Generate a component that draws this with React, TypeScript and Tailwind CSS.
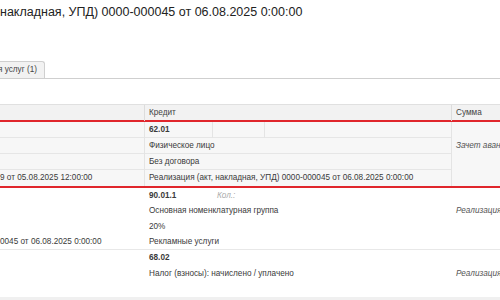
const font = { fontFamily: '"Liberation Sans", Arial, sans-serif' };

export default function App() {
  const cell = 'h-4 leading-4 px-[4px] whitespace-nowrap overflow-hidden';
  return (
    <div className="w-[500px] h-[300px] overflow-hidden bg-white text-[#3a3a3a]" style={font}>
      <div className="h-[26px] pt-[2px] text-[12.5px] leading-[20px] text-[#222] whitespace-nowrap">
        накладная, УПД) 0000-000045 от 06.08.2025 0:00:00
      </div>
      <div className="mt-[35px] flex items-end border-b border-[#cfcfcf]">
        <div className="h-[17px] w-[45px] bg-[#f2f2f2] border-r border-t border-[#cfcfcf] rounded-tr-[3px] text-[8.2px] leading-[16px] text-[#444] whitespace-nowrap overflow-hidden flex justify-end pr-[7px]">
          ия услуг (1)
        </div>
      </div>
      <div className="mt-[25px] text-[8.2px]">
        {/* header */}
        <div className="grid grid-cols-[145px_307px_1fr] h-[16px] bg-[#f2f2f2] border-t border-[#e0e0e0] text-[#444]">
          <div className="border-r border-[#dcdcdc]" />
          <div className={`${cell} border-r border-[#dcdcdc]`}>Кредит</div>
          <div className={cell}>Сумма</div>
        </div>
        {/* selected record */}
        <div className="border-y-2 border-[#e0262c] bg-[#f7f7f7] grid grid-cols-[145px_307px_1fr]">
          <div className="border-r border-[#e4e4e4] flex flex-col">
            <div className="h-4 border-b border-[#e6e6e6]" />
            <div className="h-4 border-b border-[#e6e6e6]" />
            <div className="h-4 border-b border-[#e6e6e6]" />
            <div className={`${cell} pl-0`}>9 от 05.08.2025 12:00:00</div>
          </div>
          <div className="border-r border-[#e4e4e4] flex flex-col">
            <div className="h-4 border-b border-[#e6e6e6] grid grid-cols-[68px_52px_1fr]">
              <div className={`${cell} font-bold border-r border-[#e4e4e4]`}>62.01</div>
              <div className="border-r border-[#e4e4e4]" />
              <div />
            </div>
            <div className={`${cell} border-b border-[#e6e6e6]`}>Физическое лицо</div>
            <div className={`${cell} border-b border-[#e6e6e6]`}>Без договора</div>
            <div className={cell}>Реализация (акт, накладная, УПД) 0000-000045 от 06.08.2025 0:00:00</div>
          </div>
          <div className="flex flex-col">
            <div className="h-4" />
            <div className={`${cell} italic text-[#555]`}>Зачет аванса</div>
          </div>
        </div>
        {/* second record */}
        <div className="grid grid-cols-[145px_307px_1fr] border-b border-[#e8e8e8]">
          <div className="flex flex-col justify-end">
            <div className={`${cell} pl-0 h-[15px] leading-[15px]`}>0045 от 06.08.2025 0:00:00</div>
          </div>
          <div className="flex flex-col">
            <div className="grid grid-cols-[68px_52px_1fr] h-[15px] leading-[15px]">
              <div className={`${cell} h-[15px] leading-[15px] font-bold`}>90.01.1</div>
              <div className={`${cell} h-[15px] leading-[15px] italic text-[#aaa]`}>Кол.:</div>
              <div />
            </div>
            <div className={`${cell} h-[16px]`}>Основная номенклатурная группа</div>
            <div className={`${cell} h-[15px] leading-[15px]`}>20%</div>
            <div className={`${cell} h-[15px] leading-[15px]`}>Рекламные услуги</div>
          </div>
          <div className="flex flex-col">
            <div className="h-[15px]" />
            <div className={`${cell} italic text-[#555]`}>Реализация</div>
          </div>
        </div>
        {/* third record */}
        <div className="grid grid-cols-[145px_307px_1fr] border-b-[3px] border-[#f0f0f0]">
          <div />
          <div className="flex flex-col">
            <div className={`${cell} font-bold`}>68.02</div>
            <div className={cell}>Налог (взносы): начислено / уплачено</div>
            <div className="h-[15px]" />
          </div>
          <div className="flex flex-col">
            <div className="h-4" />
            <div className={`${cell} italic text-[#555]`}>Реализация</div>
          </div>
        </div>
      </div>
    </div>
  );
}
